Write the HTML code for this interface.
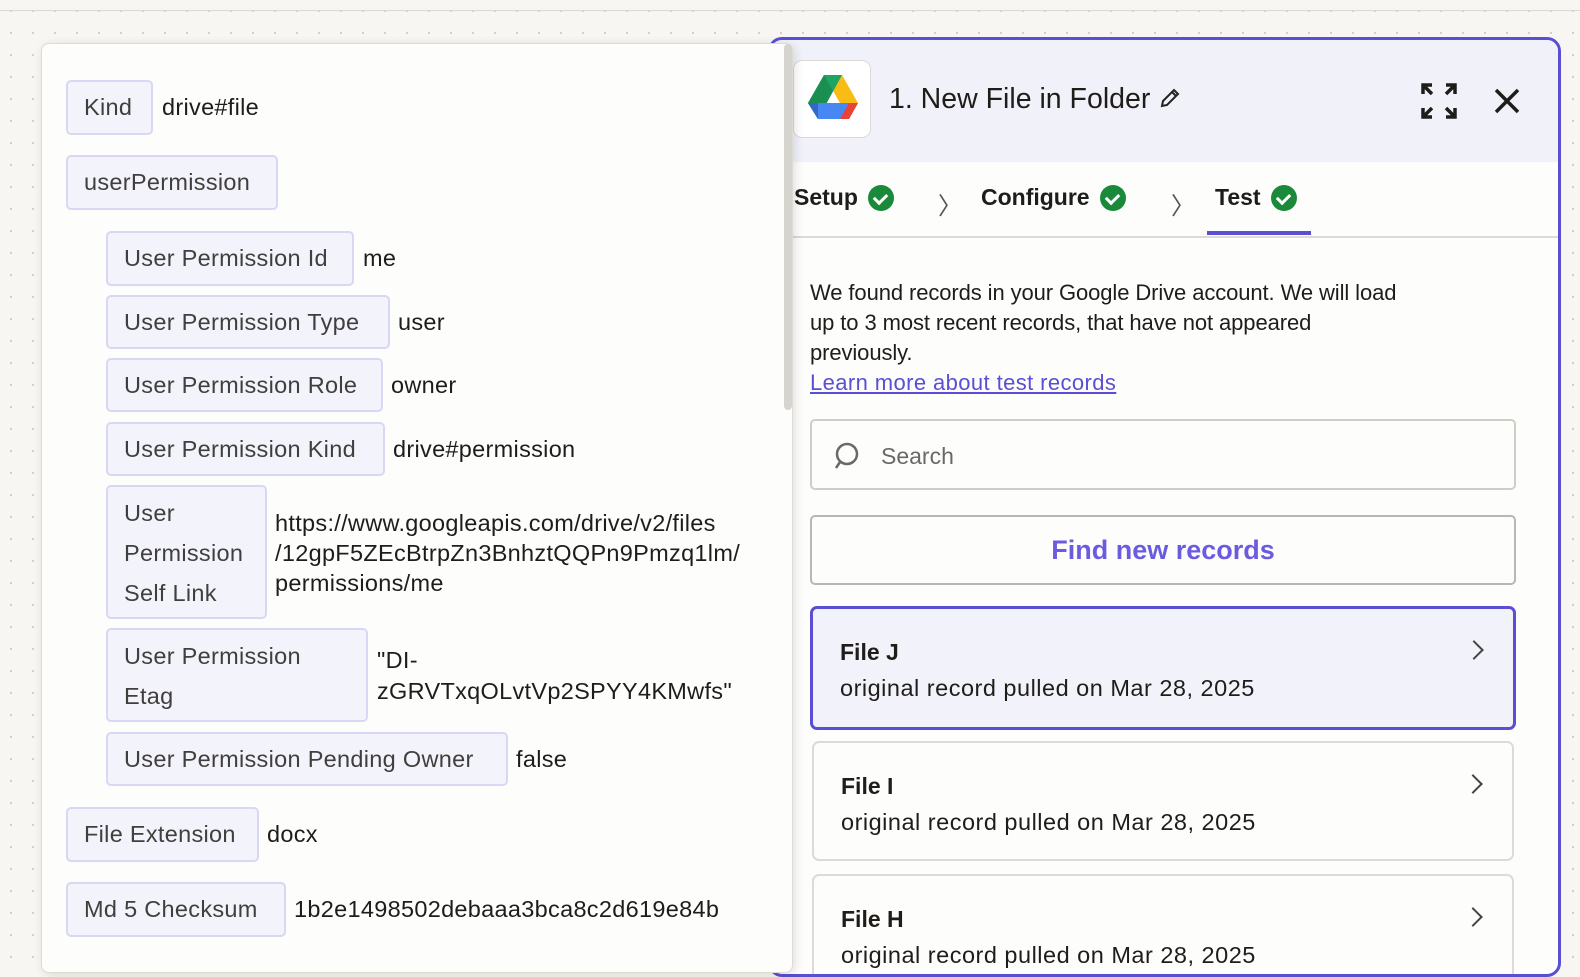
<!DOCTYPE html>
<html><head><style>
*{box-sizing:border-box;margin:0;padding:0}
body{width:1580px;height:956px;overflow:hidden;position:relative;background:#f7f6f2;background-image:radial-gradient(#cfcdc6 1px,transparent 1.2px);background-size:22px 22px;font-family:"Liberation Sans",sans-serif;color:#1f1d1a}
.topline{position:absolute;left:0;top:10px;width:1580px;height:1px;background:#d9d7d0}
.left{position:absolute;left:41px;top:43px;width:752px;height:930px;background:#fdfdfb;border:1px solid #dddbd4;border-radius:8px;box-shadow:2px 2px 10px rgba(0,0,0,.12);z-index:5}
.sb{position:absolute;left:784px;top:44px;width:8px;height:366px;background:#d6d4ce;border-radius:4px;z-index:6}
.tag{position:absolute;background:#f3f3fb;border:2px solid #d8d8f4;border-radius:5px;font-size:23.5px;letter-spacing:0.3px;color:#403f3d;padding:0 16px;display:flex;align-items:center;z-index:6;white-space:nowrap}
.tag.ml{display:block;line-height:40px;padding-top:6px}
.v{position:absolute;font-size:23.5px;letter-spacing:0.3px;color:#1f1d1a;white-space:nowrap;z-index:6}
.right{position:absolute;left:768px;top:37px;width:793px;height:940px;background:#fdfdfb;border:3px solid #5a4fd4;border-radius:14px;overflow:hidden}
.hdr{position:absolute;left:0;top:0;width:100%;height:122px;background:#f1f1f9}
.logo{position:absolute;left:22px;top:20px;width:78px;height:78px;background:#fff;border:1px solid #dcdad3;border-radius:9px}
.t{position:absolute;font-size:22px;color:#1f1d1a}
.tab{position:absolute;top:144px;font-size:23px;font-weight:bold;color:#1f1d1a;display:flex;align-items:center;gap:10px}
.ck{width:26px;height:26px;border-radius:50%;background:#1a8a3a;display:inline-block;position:relative}
.ck:after{content:"";position:absolute;left:8px;top:6px;width:6px;height:10px;border:solid #fff;border-width:0 3px 3px 0;transform:rotate(45deg)}
.chev{position:absolute;top:146px;font-size:24px;color:#555}
.box{position:absolute;border:2px solid #cfcdc6;border-radius:5px;background:#fdfdfb}
.card{position:absolute;border:2px solid #dddbd4;border-radius:7px;background:#fdfdfb}
.card b{position:absolute;left:27px;top:30px;font-size:23px}
.card span{position:absolute;left:27px;top:66px;font-size:23.5px;letter-spacing:0.5px;white-space:nowrap}
.card i{position:absolute;right:32px;top:34px;width:14px;height:14px;border:solid #444;border-width:2px 2px 0 0;transform:rotate(45deg)}
</style></head><body>
<div class="topline"></div>
<div class="left"></div>
<div class="sb"></div>

<div class="tag" style="left:66px;top:80px;width:87px;height:55px">Kind</div><div class="v" style="left:162px;top:94px">drive#file</div>
<div class="tag" style="left:66px;top:155px;width:212px;height:55px">userPermission</div>
<div class="tag" style="left:106px;top:231px;width:248px;height:55px">User Permission Id</div><div class="v" style="left:363px;top:245px">me</div>
<div class="tag" style="left:106px;top:295px;width:284px;height:54px">User Permission Type</div><div class="v" style="left:398px;top:309px">user</div>
<div class="tag" style="left:106px;top:358px;width:277px;height:54px">User Permission Role</div><div class="v" style="left:391px;top:372px">owner</div>
<div class="tag" style="left:106px;top:422px;width:279px;height:54px">User Permission Kind</div><div class="v" style="left:393px;top:436px">drive#permission</div>
<div class="tag ml" style="left:106px;top:485px;width:161px;height:134px">User<br>Permission<br>Self Link</div>
<div class="v" style="left:275px;top:508px;line-height:30px">https://www.googleapis.com/drive/v2/files<br>/12gpF5ZEcBtrpZn3BnhztQQPn9Pmzq1lm/<br>permissions/me</div>
<div class="tag ml" style="left:106px;top:628px;width:262px;height:94px">User Permission<br>Etag</div>
<div class="v" style="left:377px;top:645px;line-height:31px">"DI-<br>zGRVTxqOLvtVp2SPYY4KMwfs"</div>
<div class="tag" style="left:106px;top:732px;width:402px;height:54px">User Permission Pending Owner</div><div class="v" style="left:516px;top:746px">false</div>
<div class="tag" style="left:66px;top:807px;width:193px;height:55px">File Extension</div><div class="v" style="left:267px;top:821px">docx</div>
<div class="tag" style="left:66px;top:882px;width:220px;height:55px">Md 5 Checksum</div><div class="v" style="left:294px;top:896px">1b2e1498502debaaa3bca8c2d619e84b</div>

<div class="right">
 <div class="hdr"></div>
 <div class="logo"><svg width="78" height="78" viewBox="0 0 78 78">
  <polygon points="30,14 48,14 64,42 55,58" fill="#f9bc15"/>
  <polygon points="30,14 48,14 24,58 14,42" fill="#1fa463"/>
  <polygon points="30,14 39,30 24,58 14,42" fill="#1a8f50"/>
  <polygon points="14,42 64,42 55,58 24,58" fill="#4687f4"/>
  <polygon points="55,42 64,42 55,58 46,58" fill="#ea4335"/>
  <polygon points="14,42 24,42 24,58" fill="#3567c7"/></svg></div>
 <div class="t" style="left:118px;top:43px;font-size:28.5px">1. New File in Folder <svg width="24" height="24" viewBox="0 0 24 24" style="vertical-align:-2px"><path d="M4 20l1-5L16 4l4 4L9 19z M14 6l4 4" fill="none" stroke="#222" stroke-width="2"/></svg></div>
 <svg style="position:absolute;left:649px;top:42px" width="38" height="38" viewBox="0 0 38 38" fill="none" stroke="#1f1d1a" stroke-width="3.5"><path d="M3 12V3h9M3 3l9 9M35 12V3h-9M35 3l-9 9M3 26v9h9M3 35l9-9M35 26v9h-9M35 35l-9-9"/></svg>
 <svg style="position:absolute;left:723px;top:48px" width="26" height="26" viewBox="0 0 26 26" stroke="#1f1d1a" stroke-width="3.5"><path d="M2 2l22 22M24 2L2 24"/></svg>
 <div class="tab" style="left:23px">Setup <span class="ck"></span></div>
 <div class="chev" style="left:167px">〉</div>
 <div class="tab" style="left:210px">Configure <span class="ck"></span></div>
 <div class="chev" style="left:400px">〉</div>
 <div class="tab" style="left:444px">Test <span class="ck"></span></div>
 <div style="position:absolute;left:0;top:196px;width:100%;height:2px;background:#dddbd4"></div>
 <div style="position:absolute;left:436px;top:191px;width:104px;height:4px;background:#5a4fd4"></div>
 <div class="t" style="left:39px;top:238px;line-height:30px;font-size:22px;letter-spacing:-0.1px">We found records in your Google Drive account. We will load<br>up to 3 most recent records, that have not appeared<br>previously.<br><span style="color:#5a4fd4;text-decoration:underline;letter-spacing:0.4px">Learn more about test records</span></div>
 <div class="box" style="left:39px;top:379px;width:706px;height:71px"><svg style="position:absolute;left:18px;top:19px" width="32" height="32" viewBox="0 0 32 32" fill="none" stroke="#6b6965" stroke-width="2.5"><circle cx="17" cy="14" r="10"/><path d="M10 22l-4 6"/></svg><span style="position:absolute;left:69px;top:22px;font-size:23px;color:#6b6965">Search</span></div>
 <div class="box" style="left:39px;top:475px;width:706px;height:70px;border-color:#b9b7b1"><span style="position:absolute;left:0;right:0;top:18px;text-align:center;font-size:27px;font-weight:bold;color:#6a5be0">Find new records</span></div>
 <div class="card" style="left:39px;top:566px;width:706px;height:124px;border:3px solid #5a4fd4;background:#f2f2fa"><b>File J</b><span>original record pulled on Mar 28, 2025</span><i></i></div>
 <div class="card" style="left:41px;top:701px;width:702px;height:120px"><b>File I</b><span>original record pulled on Mar 28, 2025</span><i></i></div>
 <div class="card" style="left:41px;top:834px;width:702px;height:120px"><b>File H</b><span>original record pulled on Mar 28, 2025</span><i></i></div>
</div>
</body></html>
